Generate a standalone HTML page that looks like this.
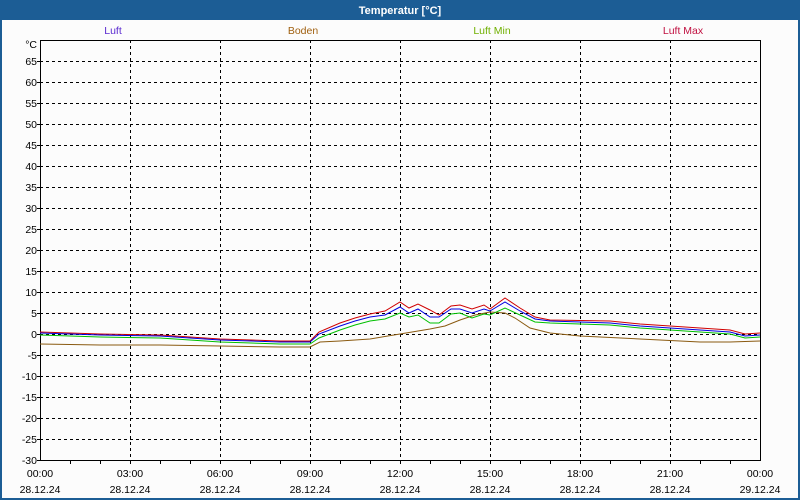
<!DOCTYPE html>
<html><head><meta charset="utf-8"><style>
html,body{margin:0;width:800px;height:500px;overflow:hidden;background:#fff;font-family:"Liberation Sans",sans-serif}
svg{display:block}
</style></head><body>
<svg width="800" height="500" xmlns="http://www.w3.org/2000/svg" font-family="Liberation Sans, sans-serif" font-size="10.5">
<rect x="0" y="0" width="800" height="500" fill="#1c5d95"/>
<rect x="2" y="20" width="796" height="478" fill="#fcfcfc"/>
<text x="400" y="14" fill="#fff" font-weight="bold" font-size="11" text-anchor="middle">Temperatur [°C]</text>
<g text-anchor="middle" font-size="10.5">
<text x="113" y="34" fill="#5a2ad0">Luft</text>
<text x="303" y="34" fill="#a06010">Boden</text>
<text x="492" y="34" fill="#70b000">Luft Min</text>
<text x="683" y="34" fill="#c01040">Luft Max</text>
</g>
<g stroke="#000" stroke-dasharray="3,3" stroke-width="1">
<path d="M40 61.5H760M40 82.5H760M40 103.5H760M40 124.5H760M40 145.5H760M40 166.5H760M40 187.5H760M40 208.5H760M40 229.5H760M40 250.5H760M40 271.5H760M40 292.5H760M40 313.5H760M40 334.5H760M40 355.5H760M40 376.5H760M40 397.5H760M40 418.5H760M40 439.5H760"/>
<path d="M130.5 40V460M220.5 40V460M310.5 40V460M400.5 40V460M490.5 40V460M580.5 40V460M670.5 40V460"/>
</g>
<rect x="40.5" y="40.5" width="720" height="420" fill="none" stroke="#000"/>
<path stroke="#000" d="M37 61.5h3M37 82.5h3M37 103.5h3M37 124.5h3M37 145.5h3M37 166.5h3M37 187.5h3M37 208.5h3M37 229.5h3M37 250.5h3M37 271.5h3M37 292.5h3M37 313.5h3M37 334.5h3M37 355.5h3M37 376.5h3M37 397.5h3M37 418.5h3M37 439.5h3M37 460.5h3
M70.5 460v4M100.5 460v4M130.5 460v4M160.5 460v4M190.5 460v4M220.5 460v4M250.5 460v4M280.5 460v4M310.5 460v4M340.5 460v4M370.5 460v4M400.5 460v4M430.5 460v4M460.5 460v4M490.5 460v4M520.5 460v4M550.5 460v4M580.5 460v4M610.5 460v4M640.5 460v4M670.5 460v4M700.5 460v4M730.5 460v4"/>
<g text-anchor="end" fill="#000">
<text x="37" y="48">°C</text>
<text x="37" y="65">65</text><text x="37" y="86">60</text><text x="37" y="107">55</text><text x="37" y="128">50</text><text x="37" y="149">45</text><text x="37" y="170">40</text><text x="37" y="191">35</text><text x="37" y="212">30</text><text x="37" y="233">25</text><text x="37" y="254">20</text><text x="37" y="275">15</text><text x="37" y="296">10</text><text x="37" y="317">5</text><text x="37" y="338">0</text><text x="37" y="359">-5</text><text x="37" y="380">-10</text><text x="37" y="401">-15</text><text x="37" y="422">-20</text><text x="37" y="443">-25</text><text x="37" y="464">-30</text>
</g>
<g text-anchor="middle" fill="#000">
<text x="40" y="477">00:00</text><text x="130" y="477">03:00</text><text x="220" y="477">06:00</text><text x="310" y="477">09:00</text><text x="400" y="477">12:00</text><text x="490" y="477">15:00</text><text x="580" y="477">18:00</text><text x="670" y="477">21:00</text><text x="760" y="477">00:00</text>
<text x="40" y="493">28.12.24</text><text x="130" y="493">28.12.24</text><text x="220" y="493">28.12.24</text><text x="310" y="493">28.12.24</text><text x="400" y="493">28.12.24</text><text x="490" y="493">28.12.24</text><text x="580" y="493">28.12.24</text><text x="670" y="493">28.12.24</text><text x="760" y="493">29.12.24</text>
</g>
<g fill="none" stroke-width="1">
<polyline stroke="#8a5a10" points="40,344 100,345 160,345 220,346 280,347 310,347 320,342 340,341 370,339 400,334 430,329 445,326 460,320 475,315 490,312 505,313 515,318 530,328 550,333 580,336 640,339 700,342 730,342 760,341"/>
<polyline stroke="#00c000" transform="translate(0,2)" points="40,333 70,334 100,335 160,336 190,338 220,340 280,342 310,342 319,336 340,328 355,323 370,319 385,317 400,311 409,315 418,313 430,321 439,321 451,312 460,311 472,316 484,312 490,313 505,306 520,313 535,320 550,321 610,323 640,326 700,330 730,332 745,336 760,335"/>
<polyline stroke="#d00000" transform="translate(0,-1)" points="40,333 70,334 100,335 160,336 190,338 220,340 280,342 310,342 319,333 340,324 355,319 370,315 385,312 400,303 409,309 418,305 430,311 439,316 451,307 460,306 472,310 484,306 490,310 505,299 520,309 535,318 550,321 610,322 640,325 700,329 730,331 745,335 760,334"/>
<polyline stroke="#0000e0" points="40,333 70,334 100,335 160,336 190,338 220,340 280,342 310,342 319,334 340,326 355,321 370,317 385,315 400,307 409,313 418,309 430,317 439,317 451,309 460,309 472,313 484,309 490,311 505,302 520,311 535,319 550,321 610,323 640,326 700,330 730,332 745,336 760,335"/>
</g>
</svg>
</body></html>
